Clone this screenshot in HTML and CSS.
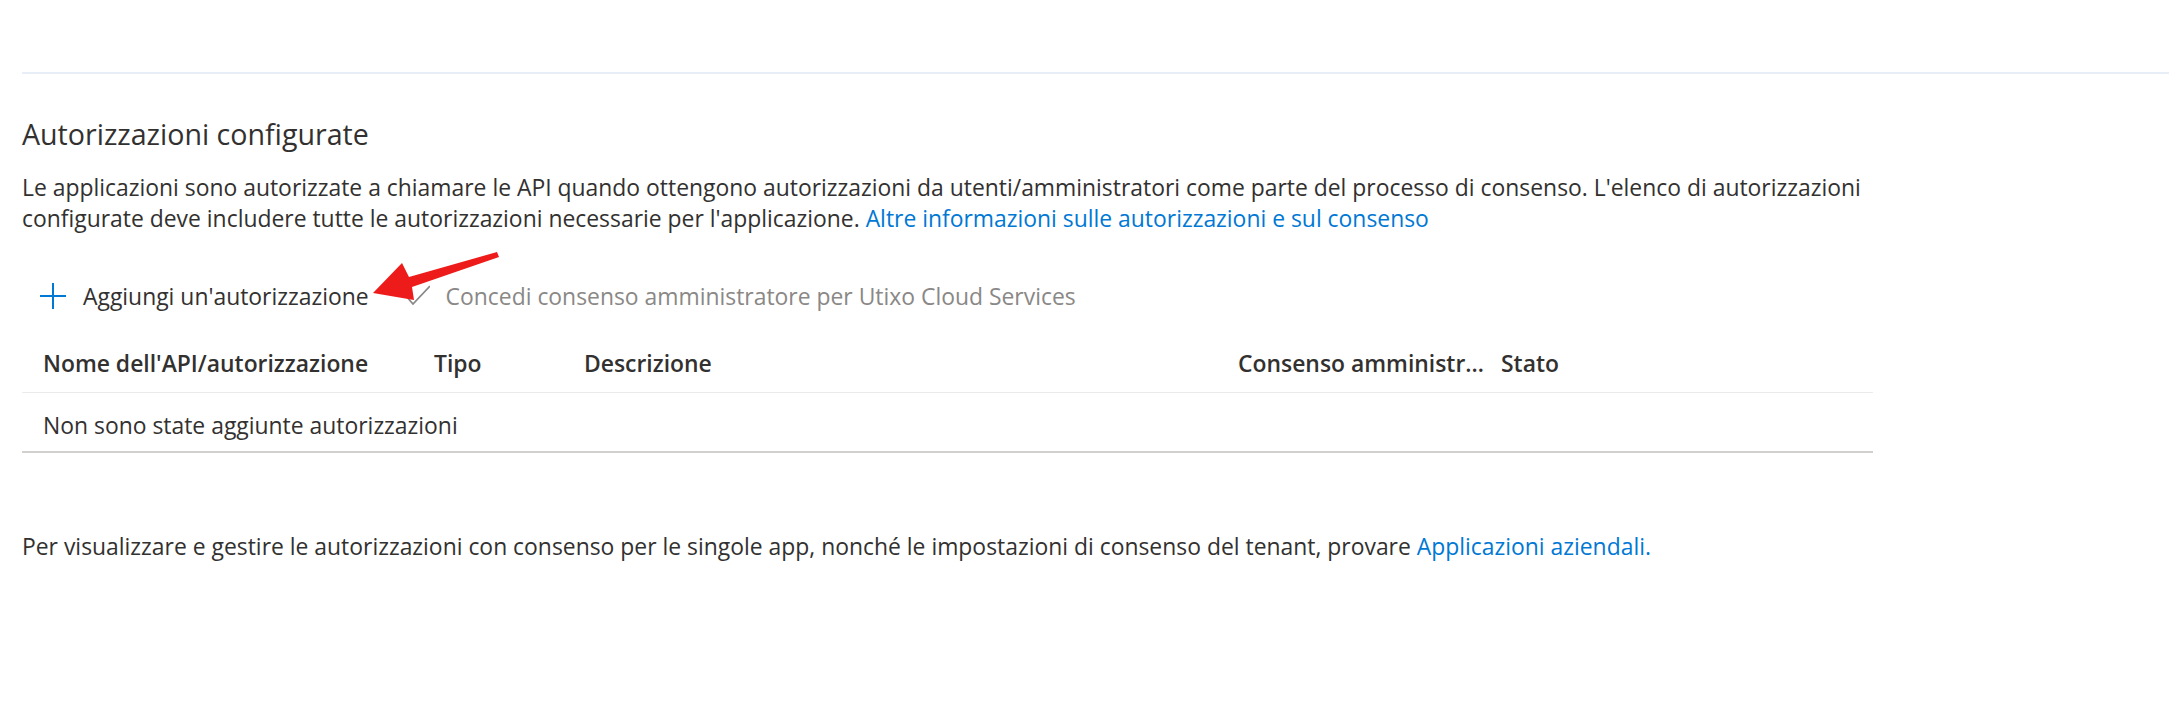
FILE: index.html
```html
<!DOCTYPE html>
<html lang="it">
<head>
  <meta charset="UTF-8">
  <meta name="viewport" content="width=device-width, initial-scale=1.0">
  <title>Autorizzazioni API</title>
  <link rel="stylesheet" href="styles.css">
</head>

<body>
  <div class="page">
    <hr class="divider">

    <section class="permissions">
      <h2>Autorizzazioni configurate</h2>
      <p class="intro">
        Le applicazioni sono autorizzate a chiamare le API quando ottengono autorizzazioni da utenti/amministratori come parte del processo di consenso. L'elenco di autorizzazioni
        configurate deve includere tutte le autorizzazioni necessarie per l'applicazione.
        <a href="#" class="link">Altre informazioni sulle autorizzazioni e sul consenso</a>
      </p>

      <div class="toolbar">
        <button class="cmd cmd-add">
          <svg class="icon" viewBox="0 0 26 26"><path d="M13 0V26M0 13H26" /></svg>
          <span>Aggiungi un'autorizzazione</span>
        </button>
        <button class="cmd cmd-grant" disabled>
          <svg class="icon" viewBox="0 0 26 26"><path d="M2 13L9 21L26 3" /></svg>
          <span>Concedi consenso amministratore per Utixo Cloud Services</span>
        </button>
      </div>

      <div class="grid">
        <div class="grid-head">
          <div class="cell">Nome dell'API/autorizzazione</div>
          <div class="cell">Tipo</div>
          <div class="cell">Descrizione</div>
          <div class="cell cell-wide">Consenso amministratore obbligatorio</div>
          <div class="cell">Stato</div>
        </div>
        <div class="grid-empty">Non sono state aggiunte autorizzazioni</div>
      </div>

      <p class="footnote">
        Per visualizzare e gestire le autorizzazioni con consenso per le singole app, nonché le impostazioni di consenso del tenant, provare
        <a href="#" class="link">Applicazioni aziendali.</a>
      </p>
    </section>

    <!-- red pointer next to the add button -->
    <svg class="pointer" viewBox="0 0 520 320">
      <polygon points="373,293 402,263 409,277 497,252 499,257 412,287 414,300" />
    </svg>
  </div>
</body>
</html>
```

FILE: styles.css
```css
body {
  margin: 0;
  font-family: 'Open Sans', 'Segoe UI', sans-serif;
  font-size: 22.9px;
  color: #323130;
  background-color: #ffffff;
}

.page {
  position: relative;
  padding: 72px 0 0 22px;
}

.divider {
  margin: 0;
  border: 0;
  height: 2px;
  background-color: #e8eef7;
}

.permissions {
  width: 1851px;
}

h2 {
  margin: 42px 0 0;
  font-size: 28.6px;
  font-weight: 400;
  line-height: 36px;
}

.intro {
  margin: 20px 0 0;
  line-height: 31px;
}

.link {
  color: #0078d4;
  text-decoration: none;
}

.toolbar {
  display: flex;
  align-items: center;
  height: 48px;
  margin-top: 38px;
}

.cmd {
  display: flex;
  align-items: center;
  gap: 17px;
  height: 48px;
  padding: 0 18px;
  border: 0;
  background: none;
  font: inherit;
  color: inherit;
  cursor: pointer;
}

.cmd .icon {
  width: 26px;
  height: 26px;
  fill: none;
  stroke-width: 2;
}

.cmd-add .icon {
  stroke: #0078d4;
}

.cmd-grant {
  gap: 16px;
  padding-left: 17px;
  color: #8a8886;
  cursor: default;
}

.cmd-grant .icon {
  stroke: #8a8886;
  stroke-width: 1.8;
}

.grid {
  margin-top: 15px;
}

.grid-head {
  display: grid;
  grid-template-columns: 391px 150px 654px 263px 1fr;
  align-items: center;
  height: 57px;
  font-weight: 600;
  border-bottom: 1px solid #edebe9;
}

.cell {
  padding-left: 21px;
  white-space: nowrap;
  overflow: hidden;
  text-overflow: ellipsis;
}

.cell-wide {
  margin-right: -6px;
}

.grid-empty {
  padding: 17px 0 10px 21px;
  line-height: 31px;
  border-bottom: 2px solid #d2d0ce;
}

.footnote {
  margin: 78px 0 0;
  line-height: 31px;
}

.pointer {
  position: absolute;
  left: 0;
  top: 0;
  width: 520px;
  height: 320px;
  pointer-events: none;
}

.pointer polygon {
  fill: #ee1b1b;
}
```
